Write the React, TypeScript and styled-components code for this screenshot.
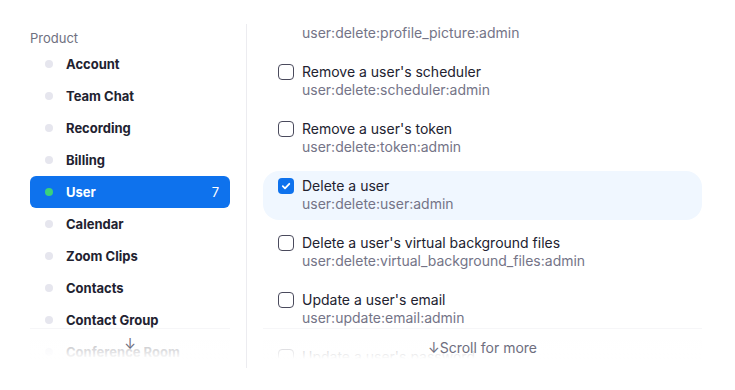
import React from "react";
import styled, { createGlobalStyle } from "styled-components";

interface Scope {
  label: string;
  scope: string;
  checked?: boolean;
}

const products = [
  "Account",
  "Team Chat",
  "Recording",
  "Billing",
  "User",
  "Calendar",
  "Zoom Clips",
  "Contacts",
  "Contact Group",
  "Conference Room",
];

const scopes: Scope[] = [
  { label: "Remove a user's profile picture", scope: "user:delete:profile_picture:admin" },
  { label: "Remove a user's scheduler", scope: "user:delete:scheduler:admin" },
  { label: "Remove a user's token", scope: "user:delete:token:admin" },
  { label: "Delete a user", scope: "user:delete:user:admin", checked: true },
  { label: "Delete a user's virtual background files", scope: "user:delete:virtual_background_files:admin" },
  { label: "Update a user's email", scope: "user:update:email:admin" },
  { label: "Update a user's password", scope: "user:update:password:admin" },
];

const App = () => (
  <>
    <GlobalStyle />
    <Page>
      <Sidebar>
        <SectionTitle>Product</SectionTitle>
        <ScrollArea>
          <ProductList>
            {products.map((name) => (
              <ProductItem key={name} active={name === "User"}>
                <Dot active={name === "User"} />
                <ProductName>{name}</ProductName>
                {name === "User" && <Count>7</Count>}
              </ProductItem>
            ))}
          </ProductList>
          <Fade offset={6}>
            <ScrollHint>↓</ScrollHint>
          </Fade>
        </ScrollArea>
      </Sidebar>
      <Main>
        <ScrollArea>
          <ScopeList>
            {scopes.map((s) => (
              <ScopeRow key={s.scope} checked={!!s.checked}>
                <Checkbox checked={!!s.checked}>
                  {s.checked && (
                    <svg width="10" height="10" viewBox="0 0 10 10">
                      <path
                        d="M1.8 5.2 L4 7.3 L8.3 2.8"
                        fill="none"
                        stroke="#fff"
                        strokeWidth="1.8"
                        strokeLinecap="round"
                        strokeLinejoin="round"
                      />
                    </svg>
                  )}
                </Checkbox>
                <ScopeText>
                  <ScopeLabel>{s.label}</ScopeLabel>
                  <ScopeId>{s.scope}</ScopeId>
                </ScopeText>
              </ScopeRow>
            ))}
          </ScopeList>
          <Fade offset={10}>
            <ScrollHint>↓Scroll for more</ScrollHint>
          </Fade>
        </ScrollArea>
      </Main>
    </Page>
  </>
);

export default App;

const GlobalStyle = createGlobalStyle`
  html, body {
    margin: 0;
    background: #ffffff;
    font-family: Inter, "Noto Sans", sans-serif;
    color: #222230;
  }
`;

const Page = styled.div`
  display: flex;
  width: 735px;
  height: 390px;
  overflow: hidden;
  padding-top: 24px;
  box-sizing: border-box;
`;

const Sidebar = styled.aside`
  width: 247px;
  box-sizing: border-box;
  padding: 4px 16px 0 30px;
  height: 344px;
  border-right: 1px solid #ececf0;
  display: flex;
  flex-direction: column;
  flex-shrink: 0;
`;

const SectionTitle = styled.div`
  font-size: 13px;
  line-height: 20px;
  color: #6e7080;
`;

const ScrollArea = styled.div`
  position: relative;
  flex: 1;
  overflow: hidden;
  min-height: 0;
`;

const ProductList = styled.ul`
  list-style: none;
  margin: 0;
  padding: 0;
  width: 200px;
`;

const ProductItem = styled.li<{ active: boolean }>`
  display: flex;
  align-items: center;
  height: 32px;
  padding: 0 11px 0 15px;
  border-radius: 6px;
  background: ${({ active }) => (active ? "#0e72ed" : "transparent")};
  color: ${({ active }) => (active ? "#ffffff" : "#222230")};
`;

const Dot = styled.span<{ active: boolean }>`
  width: 8px;
  height: 8px;
  border-radius: 50%;
  background: ${({ active }) => (active ? "#3ad17c" : "#e6e6ee")};
  margin-right: 13px;
  flex-shrink: 0;
`;

const ProductName = styled.span`
  flex: 1;
  font-size: 13px;
  font-weight: 700;
`;

const Count = styled.span`
  font-size: 13px;
`;

const Main = styled.main`
  flex: 1;
  padding: 0 33px 0 16px;
  height: 344px;
  display: flex;
  flex-direction: column;
`;

const ScopeList = styled.ul`
  list-style: none;
  margin: -24px 0 0;
  padding: 0;
  display: flex;
  flex-direction: column;
  gap: 8px;
`;

const ScopeRow = styled.li<{ checked: boolean }>`
  display: flex;
  align-items: flex-start;
  gap: 8px;
  padding: 6px 14px 7px 15px;
  border-radius: 16px;
  background: ${({ checked }) => (checked ? "#f0f7ff" : "transparent")};
`;

const Checkbox = styled.span<{ checked: boolean }>`
  width: 16px;
  height: 16px;
  margin-top: 1px;
  box-sizing: border-box;
  border-radius: 4px;
  border: ${({ checked }) => (checked ? "none" : "1.5px solid #4a4a5c")};
  background: ${({ checked }) => (checked ? "#0e72ed" : "#ffffff")};
  display: flex;
  align-items: center;
  justify-content: center;
  flex-shrink: 0;
`;

const ScopeText = styled.div`
  display: flex;
  flex-direction: column;
`;

const ScopeLabel = styled.span`
  font-size: 14px;
  line-height: 18px;
  color: #222230;
`;

const ScopeId = styled.span`
  font-size: 14px;
  line-height: 18px;
  color: #747487;
`;

const Fade = styled.div<{ offset: number }>`
  position: absolute;
  left: 0;
  right: 0;
  bottom: 0;
  height: 40px;
  border-top: 1px solid rgba(238, 238, 242, 0.5);
  background: linear-gradient(
    rgba(255, 255, 255, 0.5),
    rgba(255, 255, 255, 0.85) 22px,
    #ffffff 30px
  );
  display: flex;
  justify-content: center;
  padding-top: ${({ offset }) => offset}px;
  box-sizing: border-box;
`;

const ScrollHint = styled.span`
  font-size: 14px;
  line-height: 18px;
  color: #6e6e7e;
`;
